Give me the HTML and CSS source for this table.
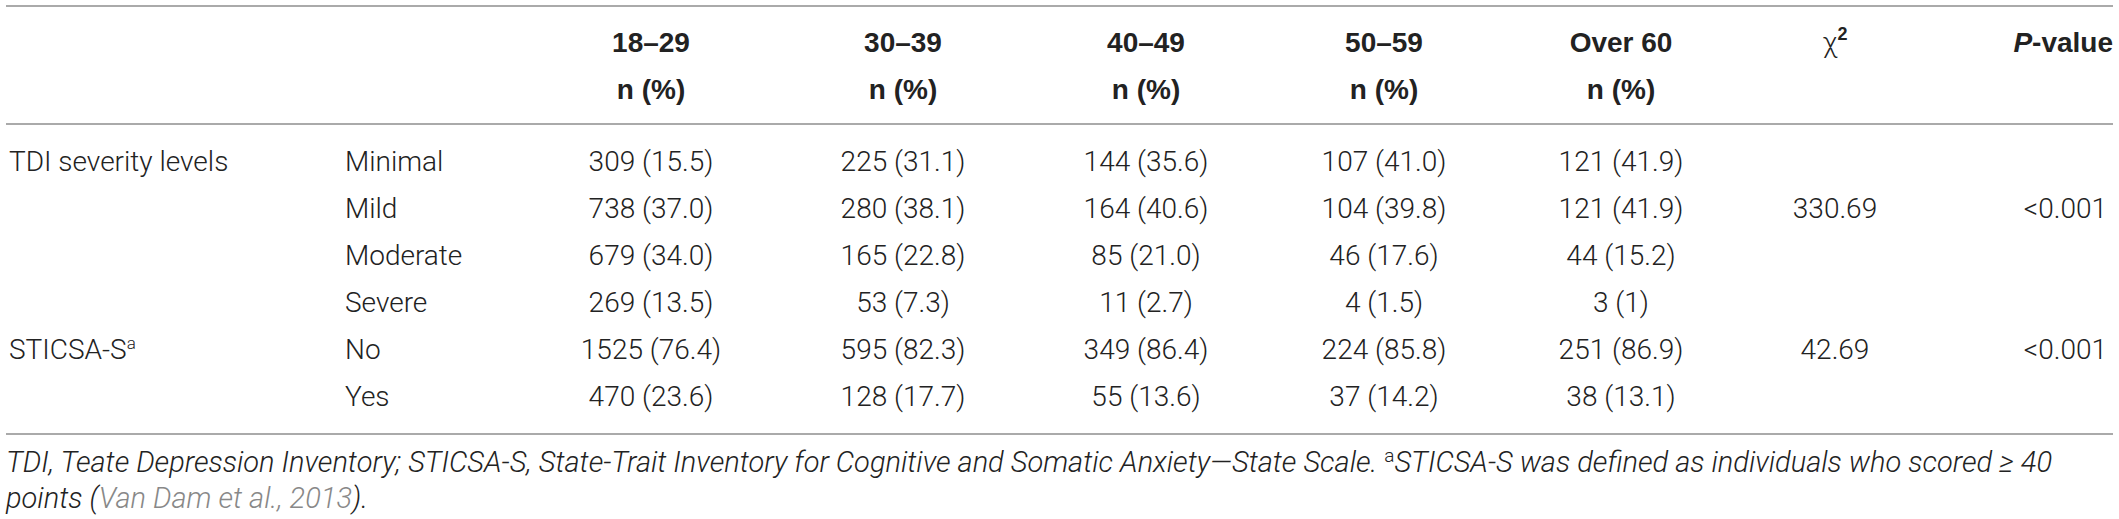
FILE: index.html
```html
<!DOCTYPE html>
<html lang="en">
<head>
<meta charset="UTF-8" />
<title>Depression and anxiety by age group</title>
<link rel="stylesheet" href="styles.css">
</head>
<body>

<table class="age-table">
  <colgroup>
    <col class="c-label">
    <col class="c-sub">
    <col class="c-a1">
    <col class="c-a2">
    <col class="c-a3">
    <col class="c-a4">
    <col class="c-a5">
    <col class="c-chi">
    <col class="c-p">
  </colgroup>
  <thead>
    <tr>
      <th></th>
      <th></th>
      <th>18–29<br>n (%)</th>
      <th>30–39<br>n (%)</th>
      <th>40–49<br>n (%)</th>
      <th>50–59<br>n (%)</th>
      <th>Over 60<br>n (%)</th>
      <th><span class="chi">χ</span><sup>2</sup></th>
      <th class="pval"><i>P</i>-value</th>
    </tr>
  </thead>
  <tbody>
    <tr class="first">
      <td class="label">TDI severity levels</td>
      <td class="label">Minimal</td>
      <td>309 (15.5)</td>
      <td>225 (31.1)</td>
      <td>144 (35.6)</td>
      <td>107 (41.0)</td>
      <td>121 (41.9)</td>
      <td></td>
      <td class="pval"></td>
    </tr>
    <tr>
      <td class="label"></td>
      <td class="label">Mild</td>
      <td>738 (37.0)</td>
      <td>280 (38.1)</td>
      <td>164 (40.6)</td>
      <td>104 (39.8)</td>
      <td>121 (41.9)</td>
      <td>330.69</td>
      <td class="pval">&lt;0.001</td>
    </tr>
    <tr>
      <td class="label"></td>
      <td class="label">Moderate</td>
      <td>679 (34.0)</td>
      <td>165 (22.8)</td>
      <td>85 (21.0)</td>
      <td>46 (17.6)</td>
      <td>44 (15.2)</td>
      <td></td>
      <td class="pval"></td>
    </tr>
    <tr>
      <td class="label"></td>
      <td class="label">Severe</td>
      <td>269 (13.5)</td>
      <td>53 (7.3)</td>
      <td>11 (2.7)</td>
      <td>4 (1.5)</td>
      <td>3 (1)</td>
      <td></td>
      <td class="pval"></td>
    </tr>
    <tr>
      <td class="label">STICSA-S<sup>a</sup></td>
      <td class="label">No</td>
      <td>1525 (76.4)</td>
      <td>595 (82.3)</td>
      <td>349 (86.4)</td>
      <td>224 (85.8)</td>
      <td>251 (86.9)</td>
      <td>42.69</td>
      <td class="pval">&lt;0.001</td>
    </tr>
    <tr class="last">
      <td class="label"></td>
      <td class="label">Yes</td>
      <td>470 (23.6)</td>
      <td>128 (17.7)</td>
      <td>55 (13.6)</td>
      <td>37 (14.2)</td>
      <td>38 (13.1)</td>
      <td></td>
      <td class="pval"></td>
    </tr>
  </tbody>
</table>

<p class="footnote">TDI, Teate Depression Inventory; STICSA-S, State-Trait Inventory for Cognitive and Somatic Anxiety—State Scale. <sup>a</sup>STICSA-S was defined as individuals who scored ≥ 40 points (<span class="cite">Van Dam et al., 2013</span>).</p>

</body>
</html>
```

FILE: styles.css
```css
body {
  margin: 0;
  padding: 0 6px;
  background: #fff;
  color: #222;
  font-family: Roboto, "Liberation Sans", Arial, sans-serif;
  font-weight: 300;
}
.age-table {
  width: 2107px;
  margin-top: 5px;
  border-collapse: collapse;
  table-layout: fixed;
  font-size: 28px;
}
.c-label { width: 334px; }
.c-sub { width: 190px; }
.c-a1 { width: 242px; }
.c-a2 { width: 262px; }
.c-a3 { width: 224px; }
.c-a4 { width: 252px; }
.c-a5 { width: 222px; }
.c-chi { width: 206px; }
.c-p { width: 175px; }
th {
  padding: 12px 0 10px;
  line-height: 47px;
  font-family: "Liberation Sans", Arial, sans-serif;
  font-weight: bold;
  color: #222;
  text-align: center;
  vertical-align: top;
  border-top: 2px solid #aaa;
  border-bottom: 2px solid #aaa;
}
th sup {
  font-size: 18px;
  line-height: 0;
  vertical-align: 12px;
}
.chi {
  font-family: Roboto, sans-serif;
  font-weight: 300;
}
td {
  padding: 0;
  line-height: 47px;
  text-align: center;
  white-space: nowrap;
}
td.label {
  text-align: left;
  padding-left: 3px;
}
td.label + td.label {
  padding-left: 5px;
}
.pval {
  text-align: right;
  padding-right: 6px;
}
th.pval {
  padding-right: 0;
}
td sup {
  font-size: 17px;
  line-height: 0;
  vertical-align: 10px;
}
tr.first td {
  padding-top: 13px;
}
tr.last td {
  padding-bottom: 13px;
  border-bottom: 2px solid #aaa;
}
.footnote {
  margin: 9px 0 0;
  width: 2107px;
  font-size: 29px;
  line-height: 36px;
  font-style: italic;
}
.footnote sup {
  font-style: normal;
  font-size: 19px;
  line-height: 0;
  vertical-align: 10px;
}
.cite {
  color: #888;
}
```
